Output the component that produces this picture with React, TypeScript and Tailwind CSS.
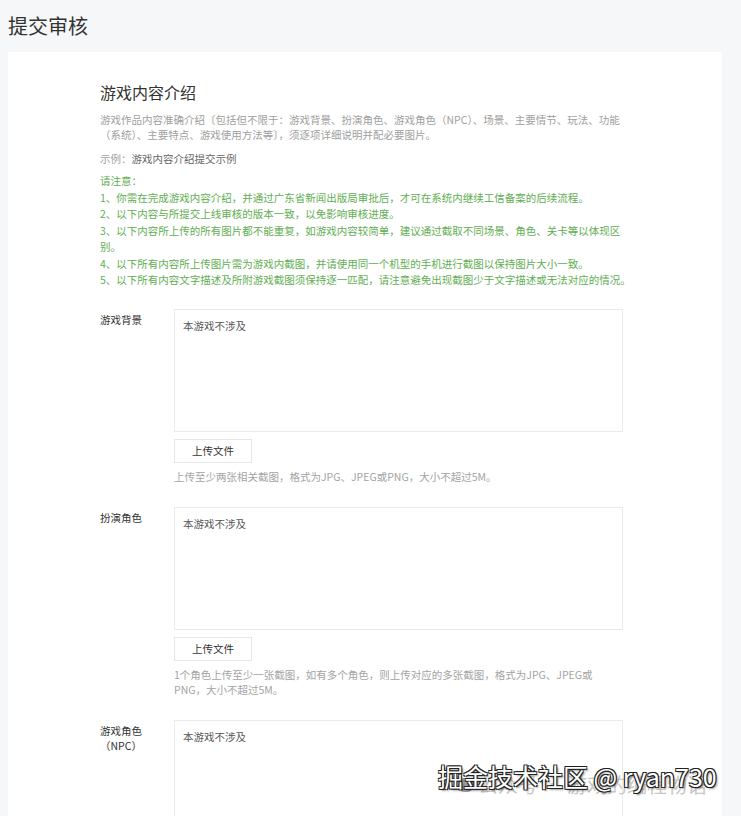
import React from 'react';

const notes = [
  '1、你需在完成游戏内容介绍，并通过广东省新闻出版局审批后，才可在系统内继续工信备案的后续流程。',
  '2、以下内容与所提交上线审核的版本一致，以免影响审核进度。',
  '3、以下内容所上传的所有图片都不能重复，如游戏内容较简单，建议通过截取不同场景、角色、关卡等以体现区别。',
  '4、以下所有内容所上传图片需为游戏内截图，并请使用同一个机型的手机进行截图以保持图片大小一致。',
  '5、以下所有内容文字描述及所附游戏截图须保持逐一匹配，请注意避免出现截图少于文字描述或无法对应的情况。',
];

const FormRow = ({ label, sub, hint }: { label: string; sub?: string; hint?: string }) => (
  <div className="flex">
    <div className="w-[74px] shrink-0 pt-[3px] text-[10.5px] leading-[15px] text-[#333]">
      <div className="inline-block text-center">
        <div>{label}</div>
        {sub && <div>{sub}</div>}
      </div>
    </div>
    <div className="flex-1">
      <div className="h-[123px] w-[449px] border border-[#ebebeb] bg-white px-[8px] pt-[8px] text-[10.5px] leading-[15px] text-[#555]">
        本游戏不涉及
      </div>
      {hint !== undefined && (
        <>
          <button className="mt-[7px] h-[24px] w-[78px] border border-[#e6e6e6] bg-white text-[10.5px] text-[#333]">
            上传文件
          </button>
          <p className="mt-[6px] w-[428px] text-[10.5px] leading-[15px] text-[#a3a3a3]">{hint}</p>
        </>
      )}
    </div>
  </div>
);

export default function App() {
  return (
    <div
      className="relative min-h-[816px] overflow-hidden bg-[#f6f7f9] pl-[8px] pr-[19px]"
      style={{ fontFamily: '"Noto Sans CJK SC", "Noto Sans", sans-serif' }}
    >
      <h1 className="pt-[11px] pb-[12px] text-[20px] leading-[29px] text-[#333]">提交审核</h1>
      <div className="min-h-[800px] bg-white pl-[92px] pr-[92px] pt-[28px]">
        <h2 className="text-[16px] leading-[24px] text-[#333]">游戏内容介绍</h2>
        <p className="mt-[8px] w-[532px] text-[10.5px] leading-[15px] text-[#a0a0a0]">
          游戏作品内容准确介绍〔包括但不限于：游戏背景、扮演角色、游戏角色（NPC）、场景、主要情节、玩法、功能（系统）、主要特点、游戏使用方法等〕，须逐项详细说明并配必要图片。
        </p>
        <p className="mt-[9px] text-[10.5px] leading-[15px] text-[#a0a0a0]">
          示例：<span className="text-[#666]">游戏内容介绍提交示例</span>
        </p>
        <div className="mt-[7px] w-[532px] text-[10.5px] leading-[16.5px] text-[#5fae52]">
          <p>请注意：</p>
          {notes.map((n) => (
            <p key={n}>{n}</p>
          ))}
        </div>
        <div className="mt-[20px] flex flex-col gap-[23px]">
          <FormRow label="游戏背景" hint="上传至少两张相关截图，格式为JPG、JPEG或PNG，大小不超过5M。" />
          <FormRow
            label="扮演角色"
            hint="1个角色上传至少一张截图，如有多个角色，则上传对应的多张截图，格式为JPG、JPEG或PNG，大小不超过5M。"
          />
          <FormRow label="游戏角色" sub="（NPC）" />
        </div>
      </div>

      {/* watermark */}
      <div className="pointer-events-none absolute left-[458px] top-[772px] flex items-center gap-[4px] text-[20px] leading-[26px] text-[#c8c8c8]">
        <span className="inline-block h-[14px] w-[16px] rounded-full bg-[#9a9a9a]" />
        <span>公众号 · 游戏的编程物语</span>
      </div>
      <div className="pointer-events-none absolute left-[438px] top-[760px] text-[25px] leading-[32px] text-white [text-shadow:-1px_-1px_0_#222,1px_-1px_0_#222,-1px_1px_0_#222,1px_1px_0_#222,2px_2px_2px_rgba(0,0,0,0.4)]">
        掘金技术社区 @ ryan730
      </div>
    </div>
  );
}
